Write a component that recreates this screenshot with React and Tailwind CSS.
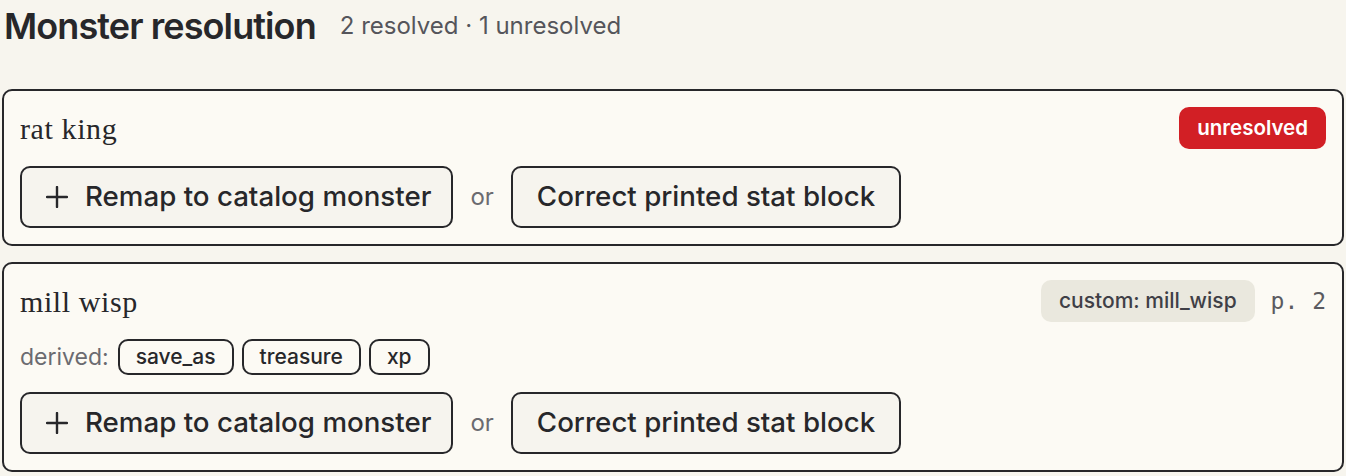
import React from 'react';

const sans = { fontFamily: 'Inter, "Noto Sans", sans-serif' };

const PlusIcon = () => (
  <svg width="22" height="22" viewBox="0 0 22 22" fill="none" stroke="currentColor" strokeWidth="2.4" strokeLinecap="round">
    <path d="M11 1v20M1 11h20" />
  </svg>
);

const ActionRow = () => (
  <div className="flex items-center gap-[17px]">
    <button className="h-[62px] flex items-center gap-[17px] pl-6 pr-5 border-2 border-[#27272a] rounded-[10px] bg-[#f6f4ee] text-[27.7px] font-medium text-[#27272a]">
      <PlusIcon />
      Remap to catalog monster
    </button>
    <span className="text-[24px] text-[#6b6b70]">or</span>
    <button className="h-[62px] flex items-center px-6 border-2 border-[#27272a] rounded-[10px] bg-[#f6f4ee] text-[27.7px] font-medium text-[#27272a]">
      Correct printed stat block
    </button>
  </div>
);

const MonsterName = ({ children }) => (
  <span className="font-['Liberation_Serif',serif] text-[30px] tracking-[0.02em] text-[#27272a]">{children}</span>
);

const Chip = ({ label }) => (
  <span className="h-[36px] flex items-center px-4 border-2 border-[#27272a] rounded-[10px] text-[21px] font-medium text-[#27272a]">
    {label}
  </span>
);

export default function App() {
  return (
    <div style={sans} className="min-h-screen bg-[#f7f5ee] px-[2px]">
      <div className="h-[52px] flex items-center gap-6 pl-[2px]">
        <h1 className="text-[36px] font-semibold tracking-tight text-[#27272a]">Monster resolution</h1>
        <span className="text-[24px] text-[#55555b]">2 resolved · 1 unresolved</span>
      </div>

      <div className="mt-[37px] flex flex-col gap-4">
        <div className="border-2 border-[#27272a] rounded-[10px] bg-[#fcfaf4] p-4 flex flex-col gap-[17px]">
          <div className="h-[42px] flex items-center justify-between">
            <MonsterName>rat king</MonsterName>
            <span className="h-[42px] flex items-center px-[18px] rounded-[10px] bg-[#d21f25] text-white text-[20.5px] font-semibold">
              unresolved
            </span>
          </div>
          <ActionRow />
        </div>

        <div className="border-2 border-[#27272a] rounded-[10px] bg-[#fcfaf4] p-4 flex flex-col gap-[17px]">
          <div className="h-[42px] flex items-center justify-between">
            <MonsterName>mill wisp</MonsterName>
            <div className="flex items-center gap-4">
              <span className="h-[42px] flex items-center px-[18px] rounded-[10px] bg-[#eae8de] text-[#3f3f46] text-[21px] font-medium">
                custom: mill_wisp
              </span>
              <span className="font-['DejaVu_Sans_Mono',monospace] text-[23px] text-[#5a5a60]">p. 2</span>
            </div>
          </div>
          <div className="flex items-center gap-2">
            <span className="text-[23px] text-[#6b6b70] mr-[1px]">derived:</span>
            <Chip label="save_as" />
            <Chip label="treasure" />
            <Chip label="xp" />
          </div>
          <ActionRow />
        </div>
      </div>
    </div>
  );
}
